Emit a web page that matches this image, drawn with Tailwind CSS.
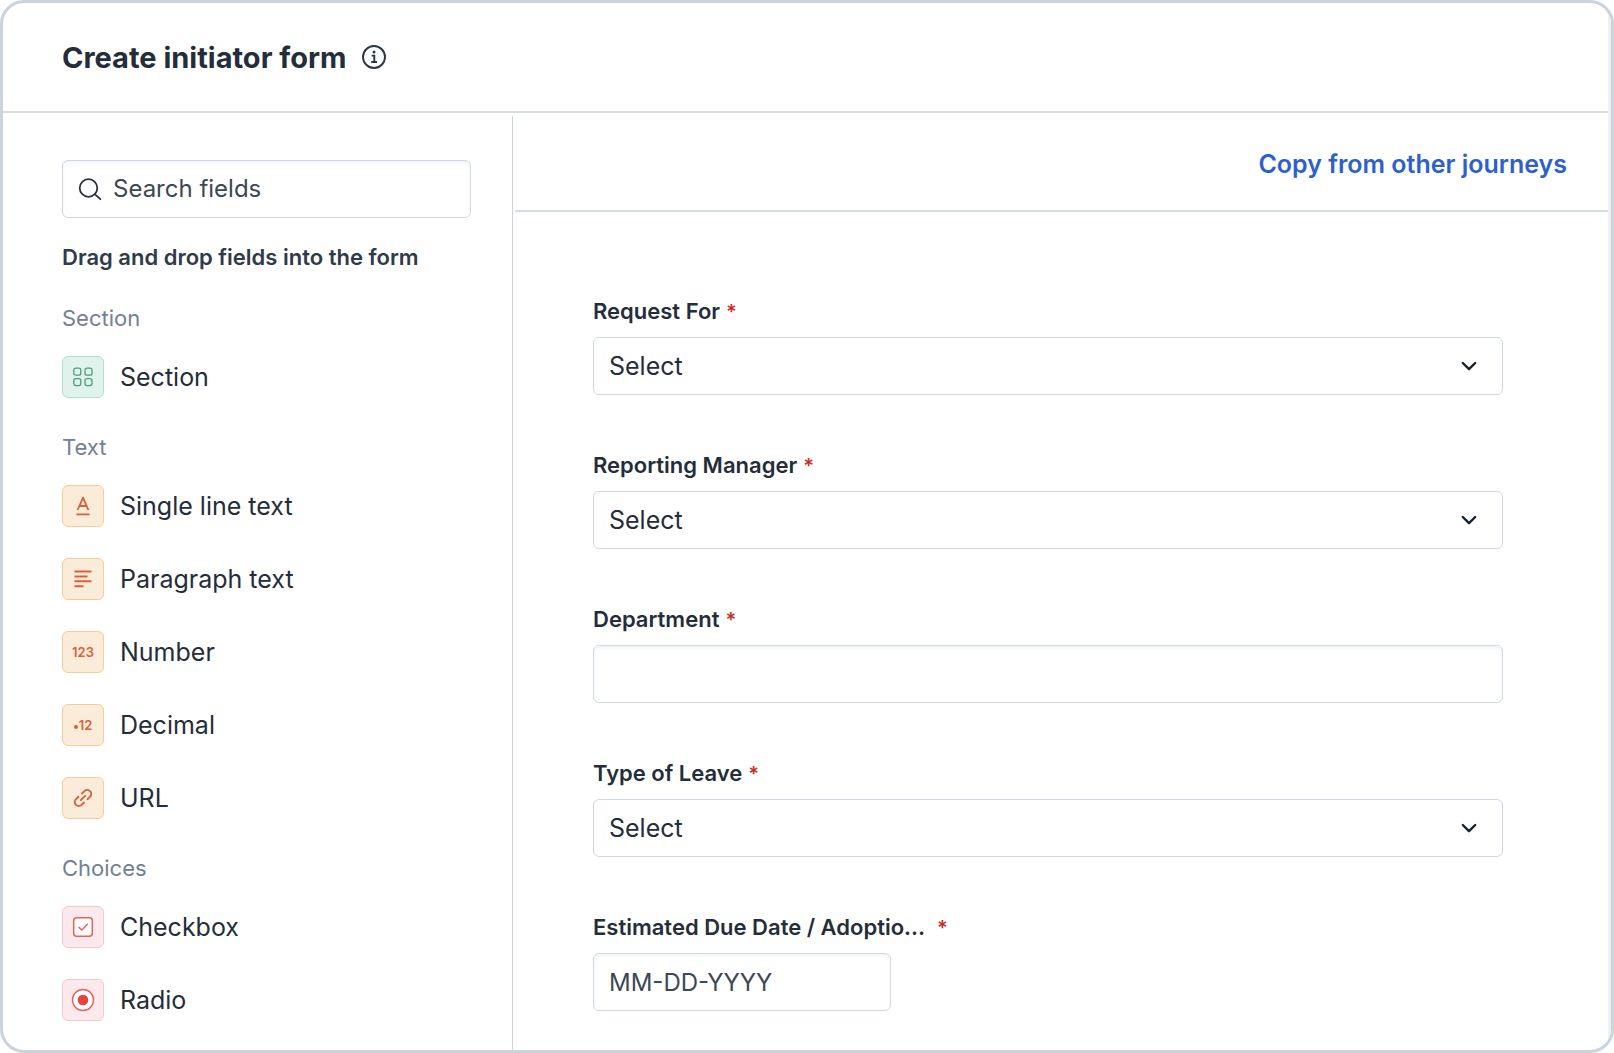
<!DOCTYPE html>
<html lang="en">
<head>
<meta charset="utf-8">
<meta name="viewport" content="width=device-width, initial-scale=1">
<title>Create initiator form</title>
<script src="https://cdn.jsdelivr.net/npm/@tailwindcss/browser@4"></script>
</head>
<body class="bg-white font-['Inter',sans-serif] text-[#232e3a]">
<div class="flex min-h-screen flex-col overflow-hidden rounded-3xl border-3 border-[#c9d4dd] bg-white">
  <div class="flex flex-1 flex-col border-r-3 border-[#eef0f2]">
    <header class="flex h-[110px] items-center gap-[15px] border-b-2 border-[#d5dce2] px-[59px]">
      <h1 class="pt-0.5 text-[29px] leading-9 font-bold text-[#232e3a]">Create initiator form</h1>
      <button type="button" aria-label="About this form">
        <svg class="block size-6" viewBox="0 0 24 24" fill="none" stroke="#2b3642" stroke-width="1.9">
          <circle cx="12" cy="12" r="11"/>
          <path d="M9.6 10.6h2.7v6.2M9.2 17h5.8"/>
          <circle cx="12" cy="7" r="1.5" fill="#2b3642" stroke="none"/>
        </svg>
      </button>
    </header>

    <div class="flex flex-1 pt-[3px]">
      <aside class="w-[510px] shrink-0 border-r border-[#c9d4dd] pt-11 pr-[41px] pb-6 pl-[59px]">
        <label class="flex h-[58px] items-center gap-[11px] rounded-md border border-[#cfd7df] px-[15px] shadow-[inset_0_2px_3px_rgba(200,212,222,0.25)]">
          <svg class="block size-6 shrink-0" viewBox="0 0 24 24" fill="none" stroke="#27323e" stroke-width="1.8" stroke-linecap="round">
            <circle cx="10.5" cy="11" r="8.8"/>
            <path d="M17 17.4l5.4 4.8"/>
          </svg>
          <input type="search" placeholder="Search fields" aria-label="Search fields" class="w-full min-w-0 bg-transparent text-2xl leading-8 outline-none placeholder:text-[#3c4855]">
        </label>

        <h2 class="mt-6 text-[22px] leading-[30px] font-semibold text-[#2f3b49]">Drag and drop fields into the form</h2>

        <div class="mt-[31px] flex flex-col gap-[34px]">
          <section>
            <h3 class="text-[22px] leading-[30px] text-[#708195]">Section</h3>
            <ul class="mt-[23px] flex flex-col gap-[31px] text-[25px] leading-8">
              <li class="flex items-center gap-4">
                <span class="flex size-[42px] items-center justify-center rounded-md border border-[#afe0d0] bg-[#dff2ec]">
                  <svg class="block size-5" viewBox="0 0 20 20" fill="none" stroke="#4f9c7d" stroke-width="1.3">
                    <rect x=".8" y="1.2" width="7" height="7" rx="2"/><rect x="12" y="1.2" width="7" height="7" rx="2"/>
                    <rect x=".8" y="11.6" width="7" height="7" rx="2"/><rect x="12" y="11.6" width="7" height="7" rx="2"/>
                  </svg>
                </span>
                Section
              </li>
            </ul>
          </section>

          <section>
            <h3 class="text-[22px] leading-[30px] text-[#708195]">Text</h3>
            <ul class="mt-[23px] flex flex-col gap-[31px] text-[25px] leading-8">
              <li class="flex items-center gap-4">
                <span class="flex size-[42px] items-center justify-center rounded-md border border-[#f6cd97] bg-[#fbecd9]">
                  <svg class="block size-5" viewBox="0 0 20 20" fill="none" stroke="#d9603a" stroke-width="1.8" stroke-linejoin="round">
                    <path d="M4.6 14L10 1.6 15.4 14M6.6 10h6.8"/><path d="M3.5 18.4h13"/>
                  </svg>
                </span>
                Single line text
              </li>
              <li class="flex items-center gap-4">
                <span class="flex size-[42px] items-center justify-center rounded-md border border-[#f6cd97] bg-[#fbecd9]">
                  <svg class="block size-5" viewBox="0 0 20 20" fill="none" stroke="#d9603a" stroke-width="2">
                    <path d="M1.5 2.4h17M1.5 7.4h13M1.5 12.2h17M1.5 17.2h9"/>
                  </svg>
                </span>
                Paragraph text
              </li>
              <li class="flex items-center gap-4">
                <span class="flex size-[42px] items-center justify-center rounded-md border border-[#f6cd97] bg-[#fbecd9] text-[13px] leading-4 font-semibold text-[#d9603a]">123</span>
                Number
              </li>
              <li class="flex items-center gap-4">
                <span class="flex size-[42px] items-center justify-center gap-px rounded-md border border-[#f6cd97] bg-[#fbecd9] text-[13px] leading-4 font-semibold text-[#d9603a]"><span class="mt-1 size-1 rounded-full bg-[#d9603a]"></span>12</span>
                Decimal
              </li>
              <li class="flex items-center gap-4">
                <span class="flex size-[42px] items-center justify-center rounded-md border border-[#f6cd97] bg-[#fbecd9]">
                  <svg class="block size-5" viewBox="0 0 20 20" fill="none" stroke="#d9603a" stroke-width="1.9" stroke-linecap="round">
                    <g transform="rotate(-44 10 10)">
                      <path d="M7 10h6"/>
                      <path d="M7.600 6H4.200a4 4 0 0 0 0 8h3.400"/>
                      <path d="M12.400 6h3.400a4 4 0 0 1 0 8h-3.400"/>
                    </g>
                  </svg>
                </span>
                URL
              </li>
            </ul>
          </section>

          <section>
            <h3 class="text-[22px] leading-[30px] text-[#708195]">Choices</h3>
            <ul class="mt-[23px] flex flex-col gap-[31px] text-[25px] leading-8">
              <li class="flex items-center gap-4">
                <span class="flex size-[42px] items-center justify-center rounded-md border border-[#f6c8ce] bg-[#fce9ed]">
                  <svg class="block size-6" viewBox="0 0 24 24" fill="none" stroke="#e8625c" stroke-width="1.5">
                    <rect x="2.700" y="2.700" width="18.600" height="18.600" rx="3" fill="#fff"/>
                    <path d="M8 12.400l2.800 2.600 5.600-5.800" stroke-linecap="round"/>
                  </svg>
                </span>
                Checkbox
              </li>
              <li class="flex items-center gap-4">
                <span class="flex size-[42px] items-center justify-center rounded-md border border-[#f6c8ce] bg-[#fce9ed]">
                  <svg class="block size-6" viewBox="0 0 24 24">
                    <circle cx="12" cy="12" r="10.500" fill="#fff" stroke="#e8605a" stroke-width="1.400"/>
                    <circle cx="12" cy="12" r="5.300" fill="#e2453d"/>
                  </svg>
                </span>
                Radio
              </li>
            </ul>
          </section>
        </div>
      </aside>

      <main class="min-w-0 flex-1 pl-0.5">
        <div class="flex h-24 items-center justify-end border-b-2 border-[#d5dce2] pt-0.5 pr-[41px]">
          <a href="#" class="text-[25px] leading-8 font-semibold text-[#2d5fce]">Copy from other journeys</a>
        </div>

        <form class="flex flex-col gap-[55px] pt-[84px] pr-[105px] pb-6 pl-[78px]">
          <div class="flex flex-col gap-[11px]">
            <label for="request-for" class="text-[22px] leading-[30px] font-semibold">Request For<span class="ml-1.5 text-xl leading-none text-[#c52f2a]">*</span></label>
            <div class="grid items-center">
              <select id="request-for" class="col-start-1 row-start-1 h-[58px] w-full appearance-none rounded-md border border-[#cfd7df] bg-white px-[15px] text-[25px] leading-8"><option>Select</option></select>
              <svg class="pointer-events-none col-start-1 row-start-1 mr-[26px] block size-4 justify-self-end" viewBox="0 0 16 16" fill="none" stroke="#17212b" stroke-width="2.400" stroke-linecap="round" stroke-linejoin="round"><path d="M1.800 5L8 11.200 14.200 5"/></svg>
            </div>
          </div>
          <div class="flex flex-col gap-[11px]">
            <label for="reporting-manager" class="text-[22px] leading-[30px] font-semibold">Reporting Manager<span class="ml-1.5 text-xl leading-none text-[#c52f2a]">*</span></label>
            <div class="grid items-center">
              <select id="reporting-manager" class="col-start-1 row-start-1 h-[58px] w-full appearance-none rounded-md border border-[#cfd7df] bg-white px-[15px] text-[25px] leading-8"><option>Select</option></select>
              <svg class="pointer-events-none col-start-1 row-start-1 mr-[26px] block size-4 justify-self-end" viewBox="0 0 16 16" fill="none" stroke="#17212b" stroke-width="2.400" stroke-linecap="round" stroke-linejoin="round"><path d="M1.800 5L8 11.200 14.200 5"/></svg>
            </div>
          </div>
          <div class="flex flex-col gap-[11px]">
            <label for="department" class="text-[22px] leading-[30px] font-semibold">Department<span class="ml-1.5 text-xl leading-none text-[#c52f2a]">*</span></label>
            <input id="department" type="text" class="h-[58px] w-full rounded-md border border-[#cfd7df] px-[15px] text-2xl leading-8 shadow-[inset_0_2px_3px_rgba(200,212,222,0.25)]">
          </div>
          <div class="flex flex-col gap-[11px]">
            <label for="leave-type" class="text-[22px] leading-[30px] font-semibold">Type of Leave<span class="ml-1.5 text-xl leading-none text-[#c52f2a]">*</span></label>
            <div class="grid items-center">
              <select id="leave-type" class="col-start-1 row-start-1 h-[58px] w-full appearance-none rounded-md border border-[#cfd7df] bg-white px-[15px] text-[25px] leading-8"><option>Select</option></select>
              <svg class="pointer-events-none col-start-1 row-start-1 mr-[26px] block size-4 justify-self-end" viewBox="0 0 16 16" fill="none" stroke="#17212b" stroke-width="2.400" stroke-linecap="round" stroke-linejoin="round"><path d="M1.800 5L8 11.200 14.200 5"/></svg>
            </div>
          </div>
          <div class="flex flex-col gap-[11px]">
            <label for="due-date" class="text-[22px] leading-[30px] font-semibold">Estimated Due Date / Adoptio...<span class="ml-3 text-xl leading-none text-[#c52f2a]">*</span></label>
            <input id="due-date" type="text" placeholder="MM-DD-YYYY" class="h-[58px] w-[298px] rounded-md border border-[#cfd7df] px-[15px] text-2xl leading-8 shadow-[inset_0_2px_3px_rgba(200,212,222,0.25)] placeholder:text-[#3c4855]">
          </div>
        </form>
      </main>
    </div>
  </div>
</div>
</body>
</html>
